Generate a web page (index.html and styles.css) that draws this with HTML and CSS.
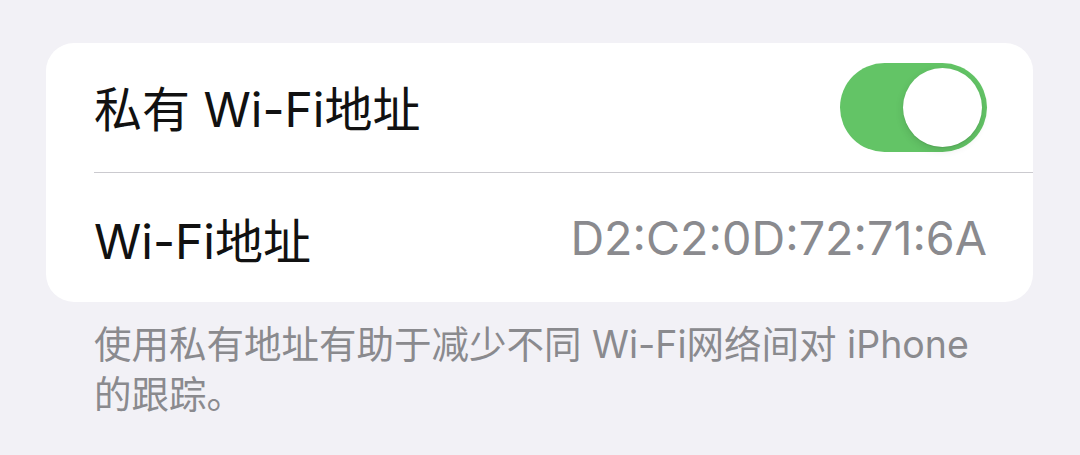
FILE: index.html
```html
<!DOCTYPE html>
<html lang="zh-CN">
<head>
  <meta charset="UTF-8">
  <meta name="viewport" content="width=device-width, initial-scale=1">
  <title>Wi-Fi 地址</title>
  <link rel="stylesheet" href="styles.css">
</head>
<body>
  <div class="page">
    <!-- 私有地址设置 -->
    <div class="group">
      <div class="row">
        <span class="row-title">私有 Wi-Fi地址</span>
        <span class="switch on"><span class="knob"></span></span>
      </div>
      <div class="row">
        <span class="row-title">Wi-Fi地址</span>
        <span class="row-value">D2:C2:0D:72:71:6A</span>
      </div>
    </div>
    <p class="footnote">使用私有地址有助于减少不同 Wi-Fi网络间对 iPhone<br>的跟踪。</p>
  </div>
</body>
</html>
```

FILE: styles.css
```css
/* 设置页：分组列表 */
body {
  margin: 0;
  background-color: #f2f1f6;
  font-family: Inter, "Noto Sans CJK SC", sans-serif;
  color: #111;
}
.page {
  padding: 43px 47px 0 46px;
}
.group {
  background-color: #ffffff;
  border-radius: 28px;
  overflow: hidden;
}
.row {
  display: flex;
  align-items: center;
  justify-content: space-between;
  height: 129px;
  margin-left: 48px;
  padding-right: 46px;
}
.row + .row {
  border-top: 1.5px solid #cbcacf;
}
.row-title {
  font-size: 48px;
  margin-top: -3px;
}
.row + .row .row-title {
  margin-top: 0;
}
.row-value {
  font-size: 46.7px;
  color: #8a8a8e;
}
.switch {
  position: relative;
  display: inline-block;
  width: 147px;
  height: 89px;
  border-radius: 45px;
  background-color: #e9e9eb;
}
.switch.on {
  background-color: #63c466;
}
.switch .knob {
  position: absolute;
  top: 5px;
  left: 5px;
  width: 79px;
  height: 79px;
  border-radius: 50%;
  background-color: #fff;
  box-shadow: 0 3px 8px rgba(0,0,0,0.12), 0 1px 1px rgba(0,0,0,0.08);
}
.switch.on .knob {
  left: 63px;
}
.footnote {
  margin: 18px 0 0 48px;
  font-size: 37.5px;
  line-height: 50px;
  color: #8a8a8e;
}
```
